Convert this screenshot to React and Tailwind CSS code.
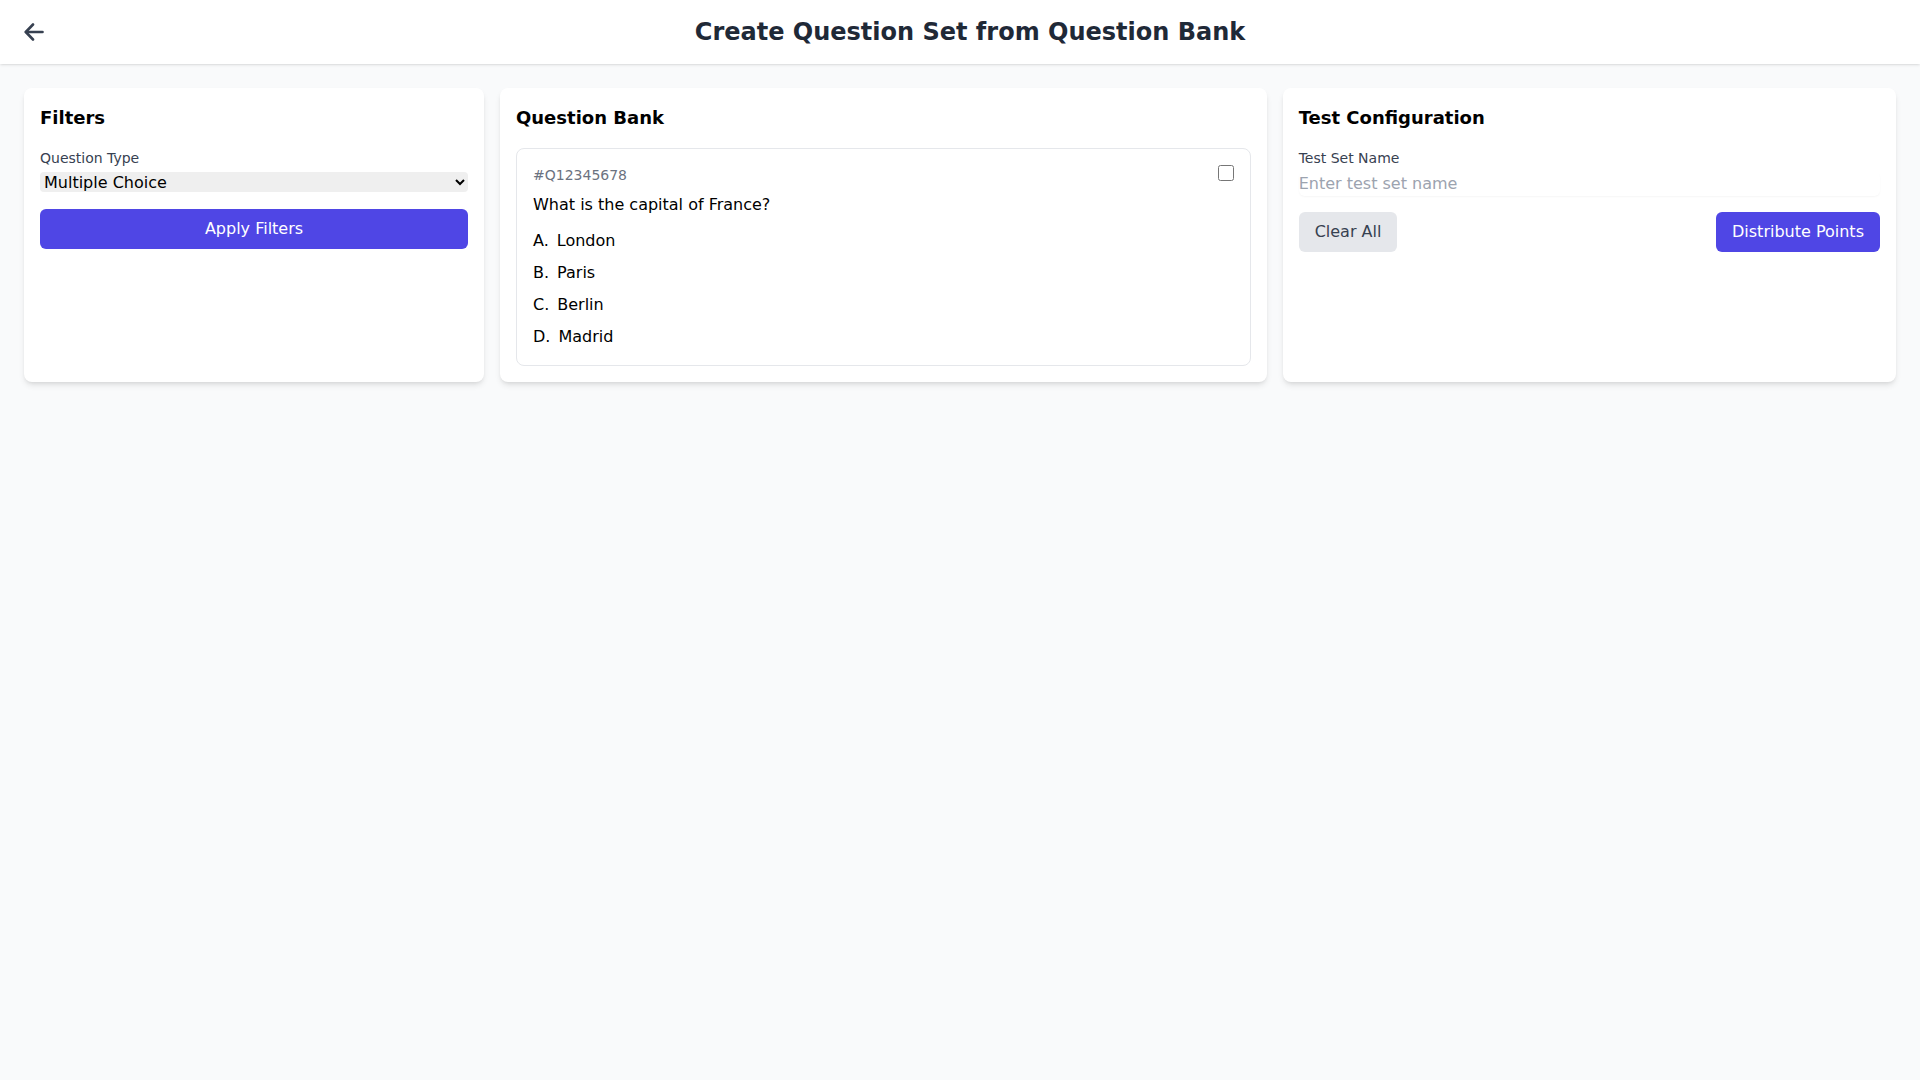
import React from "react";

export default function App() {
  const options = [
    ["A.", "London"],
    ["B.", "Paris"],
    ["C.", "Berlin"],
    ["D.", "Madrid"],
  ];
  return (
    <div
      className="min-h-screen bg-[#f9fafb] text-black"
      style={{ fontFamily: '"DejaVu Sans", sans-serif' }}
    >
      <header className="h-16 bg-white shadow-sm flex items-center px-6">
        <button className="text-[#374151] flex items-center">
          <svg width="20" height="20" viewBox="0 0 20 20" fill="none" stroke="currentColor" strokeWidth="2.6" strokeLinecap="round" strokeLinejoin="round">
            <path d="M9 2.5 L1.8 10 L9 17.5" />
            <path d="M2 10 H18.5" />
          </svg>
        </button>
        <h1 className="flex-1 text-center text-2xl font-bold text-[#1f2937]">
          Create Question Set from Question Bank
        </h1>
      </header>

      <main className="grid grid-cols-[3fr_5fr_4fr] gap-4 p-6">
        <section className="bg-white rounded-lg shadow-md p-4">
          <h2 className="text-lg font-bold mb-4">Filters</h2>
          <div>
            <label className="block text-sm text-[#374151] mb-[3px]">Question Type</label>
            <select className="w-full h-5 bg-[#efefef] rounded" defaultValue="mc">
              <option value="mc">Multiple Choice</option>
            </select>
          </div>
          <button className="mt-3.5 w-full bg-[#4f46e5] text-white rounded-md py-2">
            Apply Filters
          </button>
        </section>

        <section className="bg-white rounded-lg shadow-md p-4">
          <h2 className="text-lg font-bold mb-4">Question Bank</h2>
          <div className="border border-[#e5e7eb] rounded-lg p-4">
            <div className="flex items-start justify-between">
              <span className="text-sm text-[#6b7280]">#Q12345678</span>
              <input type="checkbox" className="w-4 h-4 m-0" />
            </div>
            <p className="mt-2">What is the capital of France?</p>
            <ul className="mt-3 space-y-2">
              {options.map(([k, v]) => (
                <li key={k} className="flex gap-2">
                  <span>{k}</span>
                  <span>{v}</span>
                </li>
              ))}
            </ul>
          </div>
        </section>

        <section className="bg-white rounded-lg shadow-md p-4">
          <h2 className="text-lg font-bold mb-4">Test Configuration</h2>
          <div>
            <label className="block text-sm text-[#374151] mb-1">Test Set Name</label>
            <input
              type="text"
              placeholder="Enter test set name"
              className="w-full rounded-md shadow-[0_1px_2px_rgba(0,0,0,0.04)] placeholder:text-[#9ca3af] outline-none"
            />
          </div>
          <div className="mt-4 flex justify-between">
            <button className="bg-[#e5e7eb] text-[#374151] rounded-md px-4 py-2">Clear All</button>
            <button className="bg-[#4f46e5] text-white rounded-md px-4 py-2">
              Distribute Points
            </button>
          </div>
        </section>
      </main>
    </div>
  );
}
